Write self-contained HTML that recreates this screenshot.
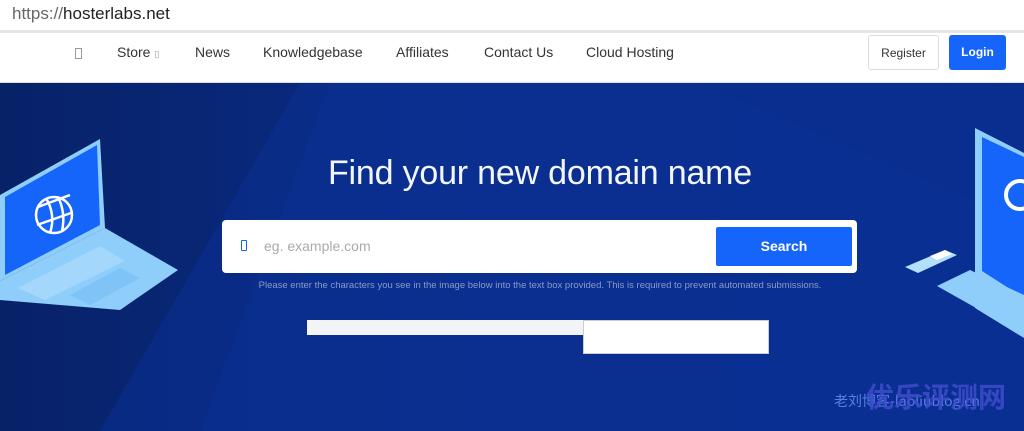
<!DOCTYPE html>
<html><head><meta charset="utf-8"><style>
*{margin:0;padding:0;box-sizing:border-box}
body{width:1024px;height:431px;overflow:hidden;font-family:"Liberation Sans",sans-serif;background:#fff;position:relative}
.url{position:absolute;left:12px;top:4px;font-size:17px;color:#222}
.url span{color:#666}
.bar{position:absolute;left:0;top:30px;width:1024px;height:3px;background:#e6e6e6}
.nav{position:absolute;top:33px;left:0;width:1024px;height:50px;background:#fff;border-bottom:1px solid #ddd}
.nav a{position:absolute;top:11px;font-size:14px;color:#333}
.btn{position:absolute;top:2px;height:35px;border-radius:3px;font-size:12px;line-height:35px;text-align:center}
.hero{position:absolute;top:83px;left:0;width:1024px;height:348px;background:linear-gradient(90deg,#082268 0%,#0a2d8a 50%,#0a2f92 100%);overflow:hidden}
h1{position:absolute;top:71px;left:0;width:1080px;text-align:center;color:#f4f6ff;font-weight:normal;font-size:34px;letter-spacing:-0.2px}
</style></head><body>
<div class="url"><span>https://</span>hosterlabs.net</div>
<div class="bar"></div>
<div class="nav">
<div style="position:absolute;left:75px;top:15px;width:7px;height:11px;border:1px solid #999"></div>
<a style="left:117px">Store <span style="font-size:9px;color:#999">▯</span></a>
<a style="left:195px">News</a>
<a style="left:263px">Knowledgebase</a>
<a style="left:396px">Affiliates</a>
<a style="left:484px">Contact Us</a>
<a style="left:586px">Cloud Hosting</a>
<div class="btn" style="left:868px;width:71px;border:1px solid #ddd;color:#333">Register</div>
<div class="btn" style="left:949px;width:57px;background:#1565fa;color:#fff;font-weight:bold">Login</div>
</div>
<div class="hero">
<svg width="1024" height="348" style="position:absolute;left:0;top:0">
<polygon points="100,348 300,0 1024,0 1024,348" fill="#0a2f8f" opacity=".6"/>
<polygon points="330,0 700,0 1024,140 1024,348 200,348" fill="#0b3396" opacity=".4"/>
<polygon points="0,112 100,56 105,145 0,198" fill="#8fcdfb"/>
<polygon points="5,114 97,62 100,142 5,192" fill="#1565fa"/>
<polygon points="0,198 105,145 178,187 120,227 0,217" fill="#8fcdfb"/>
<polygon points="70,212 120,185 140,195 90,222" fill="#7ec4f6"/>
<polygon points="18,205 100,163 125,178 45,217" fill="#b4e0fd" opacity=".55"/>
<g fill="none" stroke="#fff" stroke-width="2.5"><circle cx="54" cy="132" r="18"/><path d="M38 124 L70 112 M37 142 L71 130 M46 115 Q56 132 50 150 M58 114 Q66 130 62 148"/></g>
<polygon points="975,45 1024,70 1024,255 975,225" fill="#8fcdfb"/>
<polygon points="982,54 1024,74 1024,215 982,188" fill="#1565fa"/>
<circle cx="1020" cy="112" r="14" fill="none" stroke="#fff" stroke-width="4"/>
<polygon points="937,203 970,187 1024,212 1024,245 985,230" fill="#8fcdfb"/>
<polygon points="905,184 945,167 957,172 918,190" fill="#b4e0fd"/>
<polygon points="930,173 945,167 952,171 937,177" fill="#fff"/>
</svg>
<h1>Find your new domain name</h1>
<div style="position:absolute;left:222px;top:137px;width:635px;height:53px;background:#fff;border-radius:4px">
<div style="position:absolute;left:19px;top:20px;width:6px;height:11px;border:1.5px solid #1565fa;border-radius:1px"></div>
<div style="position:absolute;left:42px;top:18px;font-size:14px;color:#aaa">eg. example.com</div>
<div style="position:absolute;left:494px;top:7px;width:136px;height:39px;background:#1565fa;border-radius:2px;color:#fff;font-weight:bold;font-size:14px;line-height:39px;text-align:center">Search</div>
</div>
<div style="position:absolute;left:0;top:197px;width:1080px;text-align:center;font-size:9.5px;color:#8a9ac8">Please enter the characters you see in the image below into the text box provided. This is required to prevent automated submissions.</div>
<div style="position:absolute;left:307px;top:237px;width:277px;height:15px;background:#f3f4f6"></div>
<div style="position:absolute;left:583px;top:237px;width:186px;height:34px;background:#fff;border:1px solid #ccc"></div>
<div style="position:absolute;left:834px;top:310px;font-size:14px;line-height:16px;color:#5a7ee8;font-family:'Noto Sans CJK SC',sans-serif">老刘博客-laoliublog.cn</div>
<div style="position:absolute;left:866px;top:297px;font-size:28px;line-height:32px;color:#3f4ccc;opacity:.85;font-weight:bold;font-family:'Noto Sans CJK SC',sans-serif;white-space:nowrap">优乐评测网</div>
</div>
</body></html>
